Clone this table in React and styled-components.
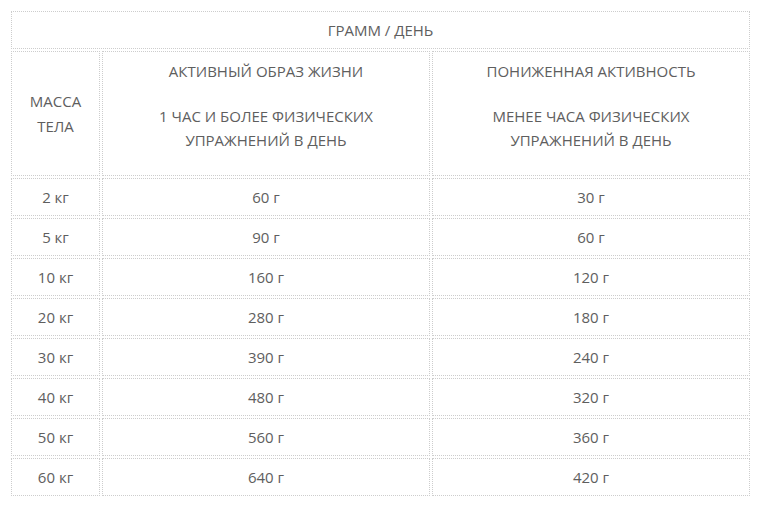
import React from 'react';
import styled, { createGlobalStyle } from 'styled-components';

const GlobalStyle = createGlobalStyle`
  html, body {
    margin: 0;
    padding: 0;
    background: #ffffff;
  }
  body {
    font-family: "Open Sans", "Noto Sans", sans-serif;
    color: #5e5e5e;
  }
`;

const Page = styled.div`
  padding: 11px 0 0 11px;
`;

const Grid = styled.div`
  display: grid;
  grid-template-columns: 89px 328px 318px;
  grid-template-rows: 38px 125px repeat(8, 38px);
  gap: 2px;
  width: 739px;
`;

const Cell = styled.div`
  box-sizing: border-box;
  border: 1px dotted #cdcdcd;
  display: flex;
  flex-direction: column;
  align-items: center;
  justify-content: ${(p) => (p.$top ? 'flex-start' : 'center')};
  padding-top: ${(p) => (p.$top ? '7px' : '0')};
  grid-column: ${(p) => p.$span || 'auto'};
  font-size: 15px;
  line-height: ${(p) => p.$lh || '24px'};
  text-align: center;
  text-transform: uppercase;
`;

const Para = styled.p`
  margin: 0 0 21px;

  &:last-child {
    margin-bottom: 0;
  }
`;

const rows = [
  ['2 кг', '60 г', '30 г'],
  ['5 кг', '90 г', '60 г'],
  ['10 кг', '160 г', '120 г'],
  ['20 кг', '280 г', '180 г'],
  ['30 кг', '390 г', '240 г'],
  ['40 кг', '480 г', '320 г'],
  ['50 кг', '560 г', '360 г'],
  ['60 кг', '640 г', '420 г'],
];

const Value = styled.span`
  text-transform: none;
`;

export default function App() {
  return (
    <Page>
      <GlobalStyle />
      <Grid>
        <Cell $span="1 / span 3">Грамм / день</Cell>

        <Cell $lh="25px">
          Масса
          <br />
          тела
        </Cell>
        <Cell $top>
          <Para>Активный образ жизни</Para>
          <Para>
            1 час и более физических
            <br />
            упражнений в день
          </Para>
        </Cell>
        <Cell $top>
          <Para>Пониженная активность</Para>
          <Para>
            Менее часа физических
            <br />
            упражнений в день
          </Para>
        </Cell>

        {rows.map((r) =>
          r.map((v, i) => (
            <Cell key={r[0] + i}>
              <Value>{v}</Value>
            </Cell>
          ))
        )}
      </Grid>
    </Page>
  );
}
